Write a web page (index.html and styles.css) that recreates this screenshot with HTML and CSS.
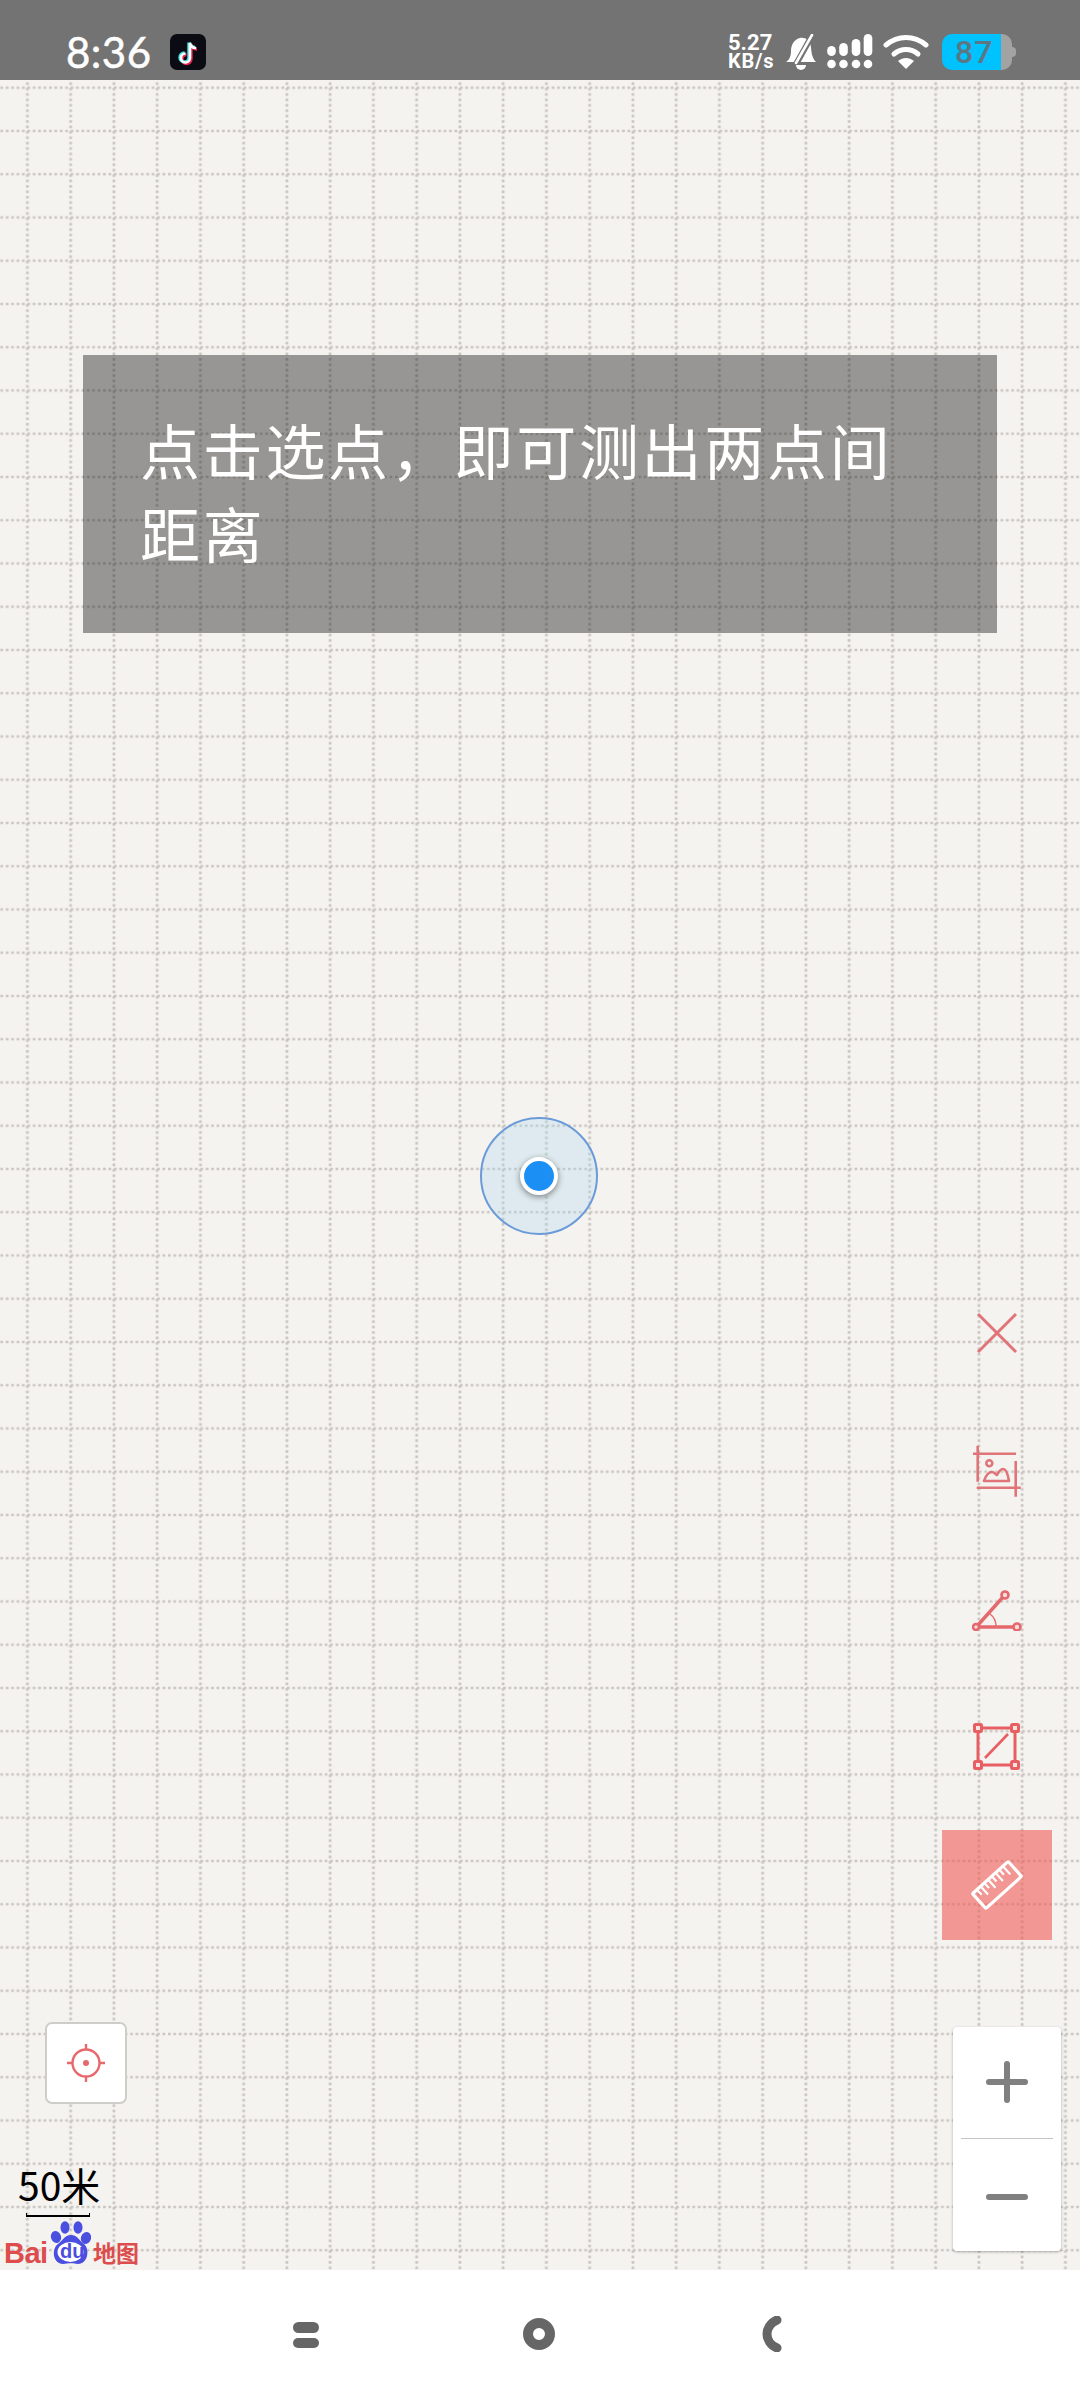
FILE: index.html
```html
<!DOCTYPE html>
<html lang="zh-CN">
<head>
    <meta charset="UTF-8">
    <meta name="viewport" content="width=device-width, initial-scale=1.0">
    <title>测距</title>
    <link rel="stylesheet" href="styles.css">
</head>
<body>
    <div class="phone">
        <header class="status-bar">
            <div class="status-left">
                <span class="time">8:36</span>
                <svg class="tiktok" viewBox="0 0 36 36">
                    <rect width="36" height="36" rx="7" fill="#0b0b14"/>
                    <path d="M20 9v15a4.5 4.5 0 1 1-4.5-4.5M20 9c.5 3 3 5 6 5" fill="none" stroke="#e9254f" stroke-width="3.4" transform="translate(1 1)"/>
                    <path d="M20 9v15a4.5 4.5 0 1 1-4.5-4.5M20 9c.5 3 3 5 6 5" fill="none" stroke="#3fe6e6" stroke-width="3.4" transform="translate(-1 -.6)"/>
                    <path d="M20 9v15a4.5 4.5 0 1 1-4.5-4.5M20 9c.5 3 3 5 6 5" fill="none" stroke="#fff" stroke-width="2.6"/>
                </svg>
            </div>
            <div class="status-right">
                <div class="net-speed"><span class="net-value">5.27</span><span class="net-unit">KB/s</span></div>
                <svg class="bell" viewBox="0 0 32 36">
                    <path d="M1 28c3-2 5-5 5-11C6 10 10 5 15 4c5-1 10 2 11 9 .5 6 1 11 5 15z" fill="#fff"/>
                    <path d="M29 -2 10 32" stroke="#737373" stroke-width="6"/>
                    <path d="M27 1 11 29" stroke="#fff" stroke-width="2.6" stroke-linecap="round"/>
                    <path d="M11 31h10a5 5 0 0 1-10 0z" fill="#fff"/>
                </svg>
                <svg class="signal" viewBox="0 0 46 36">
                    <g fill="#fff">
                        <circle cx="4.5" cy="30" r="4.3"/><circle cx="16.5" cy="30" r="4.3"/><circle cx="29" cy="30" r="4.3"/><circle cx="41" cy="30" r="4.3"/>
                        <rect x=".2" y="12" width="8.6" height="10" rx="4.3"/>
                        <rect x="12.2" y="9" width="8.6" height="13" rx="4.3"/>
                        <rect x="24.7" y="5" width="8.6" height="17" rx="4.3"/>
                        <rect x="36.7" y="0" width="8.6" height="22" rx="4.3"/>
                    </g>
                </svg>
                <svg class="wifi" viewBox="0 0 46 36">
                    <g fill="none" stroke="#fff" stroke-width="5" stroke-linecap="round">
                        <path d="M3 11c12-10 28-10 40 0"/>
                        <path d="M11 20c7-6 17-6 24 0"/>
                    </g>
                    <path d="M15 27c5-4 11-4 16 0l-8 8z" fill="#fff"/>
                </svg>
                <div class="battery">
                    <div class="battery-body"><span>87</span></div>
                    <div class="battery-tip"></div>
                </div>
            </div>
        </header>

        <main class="map">
            <svg class="map-grid" width="1080" height="2190">
                <defs>
                    <pattern id="grid" width="43.25" height="43.25" patternUnits="userSpaceOnUse" x="5.775" y="-13.925">
                        <line x1="0" y1="21.625" x2="43.25" y2="21.625" stroke="#c9c5c0" stroke-width="2.7" stroke-dasharray="2.7 2.706"/>
                        <line x1="21.625" y1="0" x2="21.625" y2="43.25" stroke="#c9c5c0" stroke-width="2.7" stroke-dasharray="2.7 2.706"/>
                    </pattern>
                </defs>
                <rect width="1080" height="2190" fill="url(#grid)"/>
            </svg>

            <div class="toast">点击选点，即可测出两点间距离</div>

            <div class="my-location">
                <div class="my-location-dot"></div>
            </div>

            <div class="tool-column">
                <button class="tool">
                    <svg viewBox="0 0 44 44" width="44" height="44"><path d="M3 3l38 38M41 3 3 41" fill="none" stroke="#e07478" stroke-width="3"/></svg>
                </button>
                <button class="tool">
                    <svg viewBox="0 0 50 54" width="50" height="54">
                        <g fill="none" stroke="#e07478" stroke-width="2.6">
                            <path d="M1 9.7h43M5.7 1.700v36M43.700 17v35.700M4.700 43.700h44"/>
                            <circle cx="17.3" cy="19.3" r="3"/>
                            <path d="M12 37c2-6 5-9 8-9 2 0 3 2 5 3 2-4 4-6 6-6 3 0 5 6 6 12z" stroke-linejoin="round"/>
                        </g>
                    </svg>
                </button>
                <button class="tool">
                    <svg viewBox="0 0 50 44" width="50" height="44">
                        <g fill="none" stroke="#e5686c">
                            <path d="M6 40h36M6 38 31 10" stroke-width="3.4"/>
                            <path d="M18 27c4 3 6 7 6 12" stroke-width="1.5"/>
                            <g stroke-width="2.6" fill="#f7dcdc">
                                <circle cx="4" cy="40" r="3"/>
                                <circle cx="33" cy="8" r="3.5"/>
                                <circle cx="45" cy="40" r="3.5"/>
                            </g>
                        </g>
                    </svg>
                </button>
                <button class="tool">
                    <svg viewBox="0 0 48 48" width="48" height="48">
                        <g fill="none" stroke="#e85f63" stroke-width="3">
                            <rect x="5" y="5" width="37" height="37"/>
                            <path d="M12 35 35 11" stroke-width="2.6"/>
                        </g>
                        <g fill="#f6e4e2" stroke="#e85f63" stroke-width="3">
                            <rect x="1.5" y="1.5" width="7" height="7" rx="1"/>
                            <rect x="38.5" y="1.5" width="7" height="7" rx="1"/>
                            <rect x="1.5" y="38.5" width="7" height="7" rx="1"/>
                            <rect x="38.5" y="38.5" width="7" height="7" rx="1"/>
                        </g>
                    </svg>
                </button>
                <button class="tool tool-active">
                    <svg viewBox="0 0 60 60" width="60" height="60">
                        <g fill="none" stroke="#fff" stroke-width="3.2" stroke-linejoin="round" transform="rotate(-42 30 30)">
                            <rect x="6" y="20" width="48" height="20" rx="1"/>
                            <path d="M12 20v7M17 20v11M22 20v7M27 20v11M32 20v7M37 20v11M42 20v7M47 20v11" stroke-width="2.2"/>
                        </g>
                    </svg>
                </button>
            </div>

            <button class="locate">
                <svg viewBox="0 0 40 40" width="40" height="40">
                    <g fill="none" stroke="#e8696d" stroke-width="2.4">
                        <circle cx="20" cy="20" r="13.5"/>
                        <path d="M20 1v6M20 33v6M1 20h6M33 20h6"/>
                    </g>
                    <circle cx="20" cy="20" r="3" fill="#e8696d"/>
                </svg>
            </button>

            <div class="zoom-control">
                <button class="zoom-btn zoom-in"><span class="zoom-plus"></span></button>
                <div class="zoom-divider"></div>
                <button class="zoom-btn zoom-out"><span class="zoom-minus"></span></button>
            </div>

            <div class="scale">
                <div class="scale-label">50米</div>
                <div class="scale-bar"></div>
            </div>

            <div class="baidu-logo">
                <span class="baidu-bai">Bai</span>
                <span class="baidu-paw">
                    <svg viewBox="0 0 41 43" width="41" height="43">
                        <g fill="#4a4fe0">
                            <ellipse cx="6" cy="16" rx="5" ry="6" transform="rotate(-20 6 16)"/>
                            <ellipse cx="15" cy="6.5" rx="4.5" ry="6.2"/>
                            <ellipse cx="28" cy="6.5" rx="4.5" ry="6.2"/>
                            <ellipse cx="36" cy="17" rx="5" ry="6" transform="rotate(20 36 17)"/>
                            <path d="M21 14c6 0 8 5 13 9 6 5 4 20-6 20-3 0-4-1-7-1s-5 1-8 1C3 43 1 28 8 23c5-4 7-9 13-9z"/>
                        </g>
                        <ellipse cx="20.500" cy="31" rx="13" ry="10" fill="#fff"/>
                    </svg>
                    <span class="baidu-du">du</span>
                </span>
                <span class="baidu-map">地图</span>
            </div>
        </main>

        <nav class="nav-bar">
            <div class="nav-recents"><span></span><span></span></div>
            <div class="nav-home"></div>
            <svg class="nav-back" viewBox="0 0 20 36" width="20" height="36">
                <path d="M15 4C8 7 5 13 5 18s3 11 10 14" fill="none" stroke="#666" stroke-width="9" stroke-linecap="round"/>
            </svg>
        </nav>
    </div>
</body>
</html>
```

FILE: styles.css
```css
* { box-sizing: border-box; }
html, body {
    margin: 0;
    padding: 0;
}
body {
    font-family: 'Noto Sans CJK SC', 'Noto Sans', sans-serif;
    background: #fff;
}
button {
    border: none;
    padding: 0;
    background: none;
}
.phone {
    width: 1080px;
    height: 2400px;
    display: flex;
    flex-direction: column;
    overflow: hidden;
}

/* status bar */
.status-bar {
    height: 80px;
    flex: none;
    background: #737373;
    display: flex;
    justify-content: space-between;
    align-items: center;
    padding: 24px 64px 0 66px;
    color: #fff;
}
.status-left {
    display: flex;
    align-items: center;
    gap: 20px;
}
.time {
    font-family: 'Lato', 'Roboto', sans-serif;
    font-size: 42px;
    letter-spacing: .5px;
    -webkit-text-stroke: .5px #fff;
    line-height: 1;
    width: 84px;
}
.tiktok {
    width: 36px;
    height: 36px;
}
.status-right {
    display: flex;
    align-items: center;
}
.net-speed {
    display: flex;
    flex-direction: column;
    font-family: 'Roboto', sans-serif;
    font-weight: 700;
    line-height: 18px;
    width: 48px;
    white-space: nowrap;
    margin-right: 9px;
}
.net-value { font-size: 22px; }
.net-unit {
    font-size: 20px;
    letter-spacing: .8px;
}
.bell {
    width: 32px;
    height: 36px;
    margin-right: 10px;
}
.signal {
    width: 46px;
    height: 36px;
    margin-right: 10px;
}
.wifi {
    width: 46px;
    height: 36px;
    margin-right: 13px;
}
.battery {
    display: flex;
    align-items: center;
}
.battery-body {
    width: 70px;
    height: 36px;
    background: linear-gradient(90deg, #00c2ff 84%, #a3a3a3 84%);
    border-radius: 10px;
    display: flex;
    align-items: center;
    padding-left: 13px;
}
.battery-body span {
    font-family: 'Roboto', sans-serif;
    font-weight: 500;
    font-size: 32px;
    letter-spacing: 1px;
    line-height: 1;
    color: #5d7684;
}
.battery-tip {
    width: 4px;
    height: 10px;
    background: #a3a3a3;
    border-radius: 0 5px 5px 0;
}

/* map */
.map {
    flex: none;
    height: 2190px;
    position: relative;
    background: #f5f3f0;
}
.map-grid {
    position: absolute;
    top: 0;
    left: 0;
}
.toast {
    position: absolute;
    left: 83px;
    top: 275px;
    width: 914px;
    height: 278px;
    padding: 52px 57px;
    background: rgba(0, 0, 0, 0.38);
    color: #fff;
    font-size: 60px;
    letter-spacing: 2.7px;
    line-height: 83px;
}
.my-location {
    position: absolute;
    left: 480px;
    top: 1037px;
    width: 118px;
    height: 118px;
    border-radius: 50%;
    background: rgba(170, 215, 240, 0.3);
    border: 2px solid #6a9bd8;
    display: flex;
    align-items: center;
    justify-content: center;
}
.my-location-dot {
    border-radius: 50%;
    background: #1c8ff5;
    border: 4px solid #fff;
    box-shadow: 0 2px 6px rgba(0, 0, 0, 0.45);
    box-sizing: content-box;
    width: 30px;
    height: 30px;
}
.tool-column {
    position: absolute;
    right: 28px;
    top: 1198px;
    display: flex;
    flex-direction: column;
    gap: 28px;
}
.tool {
    width: 110px;
    height: 110px;
    display: flex;
    align-items: center;
    justify-content: center;
}
.tool-active {
    background: rgba(240, 90, 85, 0.6);
}
.locate {
    position: absolute;
    left: 45px;
    top: 1942px;
    width: 82px;
    height: 82px;
    background: #fff;
    border: 2px solid #cfcdca;
    border-radius: 7px;
    display: flex;
    align-items: center;
    justify-content: center;
}
.zoom-control {
    position: absolute;
    left: 953px;
    top: 1947px;
    width: 108px;
    height: 224px;
    background: #fff;
    border-radius: 4px;
    box-shadow: 0 1px 3px rgba(0, 0, 0, 0.3);
    display: flex;
    flex-direction: column;
    align-items: center;
}
.zoom-btn {
    flex: 1;
    width: 100%;
    display: flex;
    align-items: center;
    justify-content: center;
}
.zoom-in { padding-bottom: 2px; }
.zoom-out { padding-top: 3px; }
.zoom-divider {
    width: 92px;
    height: 1px;
    flex: none;
    background: #c4c4c4;
}
.zoom-plus,
.zoom-minus {
    display: block;
    width: 42px;
    height: 6px;
    border-radius: 3px;
    background: #808080;
    position: relative;
}
.zoom-plus::after {
    content: "";
    position: absolute;
    left: 18px;
    top: -18px;
    width: 6px;
    height: 42px;
    border-radius: 3px;
    background: #808080;
}
.scale {
    position: absolute;
    left: 18px;
    top: 2082px;
    width: 84px;
}
.scale-label {
    font-size: 39px;
    line-height: 44px;
    color: #000;
}
.scale-bar {
    width: 64px;
    height: 4px;
    margin: 7px 0 0 8px;
    border: 1px solid #000;
    border-top: none;
    border-bottom-width: 2px;
}
.baidu-logo {
    position: absolute;
    left: 4px;
    top: 2140px;
    display: flex;
    align-items: flex-end;
    height: 44px;
    color: #dd4d4d;
}
.baidu-bai {
    font-family: 'Liberation Sans', sans-serif;
    font-weight: 700;
    font-size: 29px;
    line-height: 30px;
    letter-spacing: -.5px;
    width: 46px;
    margin-bottom: -4px;
}
.baidu-paw {
    position: relative;
    width: 41px;
    height: 43px;
    flex: none;
    display: block;
}
.baidu-paw svg {
    display: block;
}
.baidu-du {
    position: absolute;
    left: 10px;
    top: 19px;
    font-family: 'Liberation Sans', sans-serif;
    font-weight: 700;
    font-size: 20px;
    line-height: 22px;
    color: #4a4fe0;
}
.baidu-map {
    font-size: 23px;
    font-weight: 700;
    line-height: 23px;
    margin-left: 2px;
}

/* nav bar */
.nav-bar {
    flex: 1;
    background: #fff;
    position: relative;
}
.nav-recents {
    position: absolute;
    left: 293px;
    top: 52px;
    width: 26px;
    display: flex;
    flex-direction: column;
    gap: 5px;
}
.nav-recents span {
    height: 10.5px;
    border-radius: 6px;
    background: #666;
}
.nav-home {
    position: absolute;
    left: 523px;
    top: 48px;
    width: 32px;
    height: 32px;
    border-radius: 50%;
    border: 10px solid #666;
}
.nav-back {
    position: absolute;
    left: 762px;
    top: 46px;
}
```
